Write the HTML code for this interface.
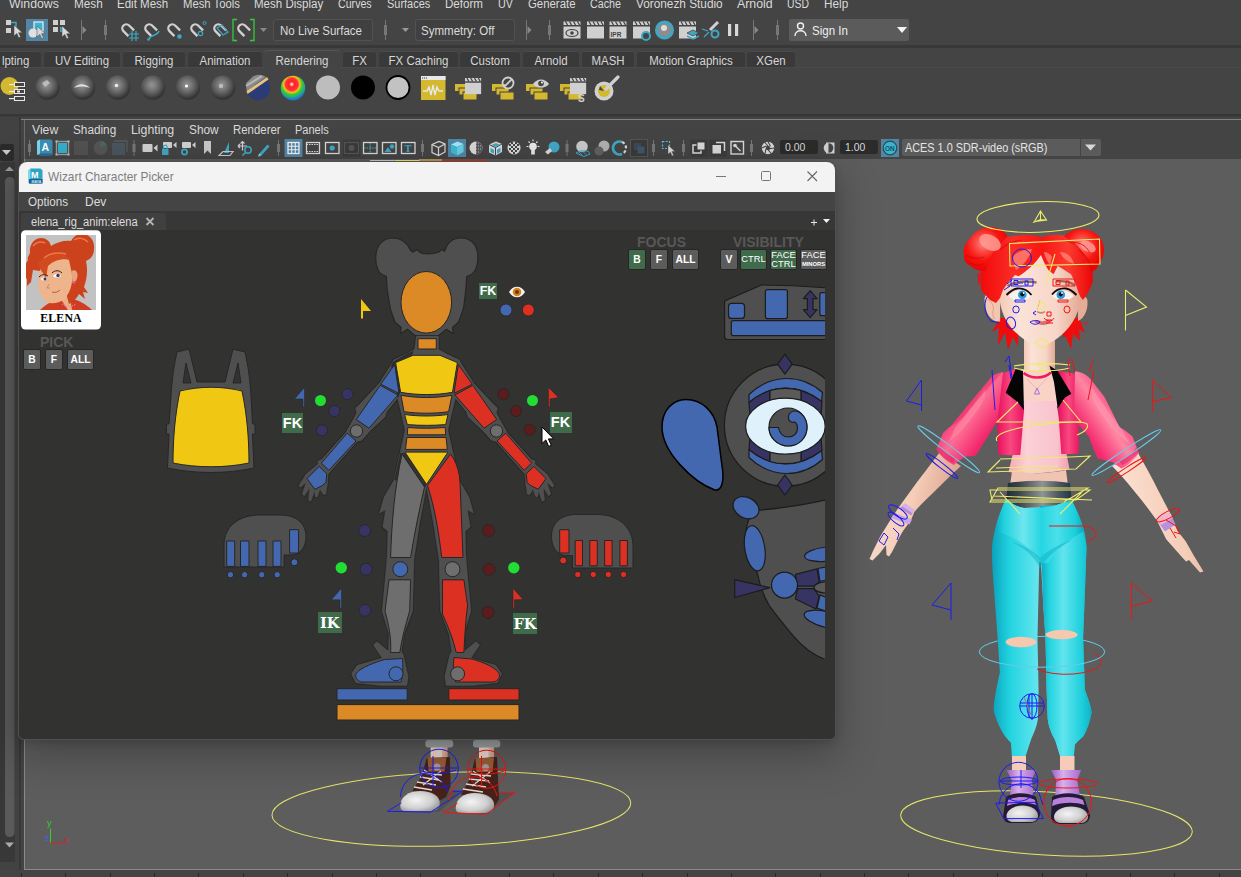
<!DOCTYPE html>
<html lang="en"><head><meta charset="utf-8"><title>Wizart Character Picker</title>
<style>
html,body{margin:0;padding:0;background:#444;overflow:hidden}
#root{position:relative;width:1241px;height:877px;background:#444;overflow:hidden;font-family:"Liberation Sans",sans-serif;font-size:12px;color:#dadada}
#root svg{position:absolute;left:0;top:0}
.t{position:absolute;white-space:nowrap;line-height:14px;height:14px;transform-origin:0 50%}
.mm{top:-2.8px;font-size:12px}
.tab{position:absolute;top:51px;height:16px;background:#393939;border-radius:3px 3px 0 0;box-shadow:inset 0 1px 0 #4a4a4a;}
.tab span{position:absolute;left:0;right:0;top:3px;text-align:center;font-size:12px;transform:scaleX(.955);line-height:15px;color:#d6d6d6}
.tab.act{top:50px;height:18px;background:#444;box-shadow:inset 0 1px 0 #555}
.tab.act span{top:4px}
.fld{position:absolute;box-sizing:border-box;border:1px solid #525252;border-radius:3px;background:#404040}
.pm{top:122.5px;font-size:12px}
#win{position:absolute;left:19px;top:162px;width:816px;height:578px;border-radius:8px 8px 0 0;overflow:hidden;background:#323231;box-shadow:0 0 0 1px #2c2c2c}
.btn{position:absolute;box-sizing:border-box;height:21px;border:1px solid #262626;border-radius:2px;background:#5c5c5c;color:#fff;font-weight:bold;font-size:10.3px;text-align:center;line-height:19px;font-family:"Liberation Sans",sans-serif}
.btn.g{background:#3f6b4b}
.btn.s{font-weight:normal;font-size:9.3px;line-height:9px}
.lbl{position:absolute;background:#3f6b4b;color:#fff;font-weight:bold;text-align:center}
.hd{position:absolute;color:#585858;font-weight:bold;font-size:14px;line-height:14px}
</style></head><body><div id="root">
<!-- ===== Maya main chrome ===== -->
<svg width="1241" height="877" viewBox="0 0 1241 877">
<!-- status line separators -->
<rect x="0" y="45" width="1241" height="3" fill="#383838"/>
<rect x="0" y="67" width="1241" height="1" fill="#4a4a4a"/>
<rect x="0" y="114" width="1241" height="2.500" fill="#373737"/>
<rect x="21" y="119" width="1220" height="1" fill="#808080"/>
<rect x="24" y="120" width="1" height="40" fill="#6c6c6c"/>
<!-- left toolbox column -->
<rect x="0" y="117" width="19" height="760" fill="#424242"/><rect x="0" y="162" width="15" height="700" fill="#383838"/>
<rect x="19" y="117" width="2" height="760" fill="#383838"/>
<rect x="0" y="144" width="14" height="17" rx="2" fill="#2b2b2b"/>
<path d="M2 150h9l-4.5 5z" fill="#c8c8c8"/>
<path d="M5 171h9l-4.5 -4.5z" fill="#9a9a9a"/>
<rect x="5" y="177" width="9.500" height="660" rx="4.500" fill="#5a5a5a"/>
<path d="M5 842.500h9l-4.500 5z" fill="#aaa"/>
<!-- viewport -->
<rect x="24" y="159" width="1217" height="710" fill="#5d5d5d"/>
<rect x="24" y="869" width="1217" height="1" fill="#8a8a8a"/><rect x="24" y="159" width="1" height="711" fill="#8a8a8a"/>
<rect x="0" y="870" width="1241" height="7" fill="#444"/>
<g fill="#2a2a2a"><rect x="21" y="873" width="1" height="4"/><rect x="65" y="873" width="1" height="4"/><rect x="110" y="873" width="1" height="4"/><rect x="154" y="873" width="1" height="4"/><rect x="198" y="873" width="1" height="4"/><rect x="243" y="873" width="1" height="4"/><rect x="287" y="873" width="1" height="4"/><rect x="332" y="873" width="1" height="4"/><rect x="376" y="873" width="1" height="4"/><rect x="420" y="873" width="1" height="4"/><rect x="465" y="873" width="1" height="4"/><rect x="509" y="873" width="1" height="4"/><rect x="553" y="873" width="1" height="4"/><rect x="598" y="873" width="1" height="4"/><rect x="642" y="873" width="1" height="4"/><rect x="687" y="873" width="1" height="4"/><rect x="731" y="873" width="1" height="4"/><rect x="775" y="873" width="1" height="4"/><rect x="820" y="873" width="1" height="4"/><rect x="864" y="873" width="1" height="4"/><rect x="908" y="873" width="1" height="4"/><rect x="953" y="873" width="1" height="4"/><rect x="997" y="873" width="1" height="4"/><rect x="1042" y="873" width="1" height="4"/><rect x="1086" y="873" width="1" height="4"/><rect x="1130" y="873" width="1" height="4"/><rect x="1174" y="873" width="1" height="4"/><rect x="1219" y="873" width="1" height="4"/></g>
</svg>
<!-- main menu --><div class="t mm" style="left:9.4px;transform:scaleX(1.025)">Windows</div><div class="t mm" style="left:73.9px;transform:scaleX(0.978)">Mesh</div><div class="t mm" style="left:116.9px;transform:scaleX(0.960)">Edit Mesh</div><div class="t mm" style="left:183.1px;transform:scaleX(0.942)">Mesh Tools</div><div class="t mm" style="left:254.4px;transform:scaleX(0.961)">Mesh Display</div><div class="t mm" style="left:338.1px;transform:scaleX(0.886)">Curves</div><div class="t mm" style="left:386.9px;transform:scaleX(0.912)">Surfaces</div><div class="t mm" style="left:445.1px;transform:scaleX(0.966)">Deform</div><div class="t mm" style="left:498.1px;transform:scaleX(0.900)">UV</div><div class="t mm" style="left:528.1px;transform:scaleX(0.949)">Generate</div><div class="t mm" style="left:590.1px;transform:scaleX(0.894)">Cache</div><div class="t mm" style="left:635.6px;transform:scaleX(0.984)">Voronezh Studio</div><div class="t mm" style="left:736.9px;transform:scaleX(1.029)">Arnold</div><div class="t mm" style="left:787.4px;transform:scaleX(0.864)">USD</div><div class="t mm" style="left:823.9px;transform:scaleX(0.980)">Help</div>
<!-- status line fields -->
<div class="fld" style="left:273px;top:19px;width:100px;height:22px"></div><div class="t" style="left:280px;top:23.8px;font-size:12px;transform:scaleX(.96)">No Live Surface</div>
<div class="fld" style="left:415px;top:19px;width:100px;height:22px"></div><div class="t" style="left:421px;top:23.8px;font-size:12px;transform:scaleX(.96)">Symmetry: Off</div>
<div style="position:absolute;left:789px;top:19px;width:120px;height:22px;background:#5b5b5b;border-radius:2px"></div><div class="t" style="left:812px;top:24.2px;font-size:12px;transform:scaleX(.96);color:#eee">Sign In</div>
<!-- shelf tabs -->
<div class="tab" style="left:-8px;width:49px"><span style="left:9px;text-align:left">lpting</span></div>
<div class="tab" style="left:44px;width:76px"><span>UV Editing</span></div>
<div class="tab" style="left:123px;width:62px"><span>Rigging</span></div>
<div class="tab" style="left:188px;width:74px"><span>Animation</span></div>
<div class="tab act" style="left:264px;width:76px"><span>Rendering</span></div>
<div class="tab" style="left:343px;width:33px"><span>FX</span></div>
<div class="tab" style="left:379px;width:79px"><span>FX Caching</span></div>
<div class="tab" style="left:460px;width:60px"><span>Custom</span></div>
<div class="tab" style="left:523px;width:56px"><span>Arnold</span></div>
<div class="tab" style="left:582px;width:52px"><span>MASH</span></div>
<div class="tab" style="left:637px;width:108px"><span>Motion Graphics</span></div>
<div class="tab" style="left:747px;width:48px"><span>XGen</span></div>
<!-- panel menu --><div class="t pm" style="left:32.4px;transform:scaleX(1.016)">View</div><div class="t pm" style="left:72.9px;transform:scaleX(0.981)">Shading</div><div class="t pm" style="left:130.9px;transform:scaleX(1.027)">Lighting</div><div class="t pm" style="left:188.9px;transform:scaleX(0.989)">Show</div><div class="t pm" style="left:232.9px;transform:scaleX(0.953)">Renderer</div><div class="t pm" style="left:294.9px;transform:scaleX(0.918)">Panels</div>
<div style="position:absolute;left:780px;top:140px;width:38px;height:14px;background:#2b2b2b;border-radius:2px"></div><div class="t" style="left:784.5px;top:140.3px;font-size:11.2px;transform:scaleX(.93)">0.00</div>
<div style="position:absolute;left:840px;top:140px;width:38px;height:14px;background:#2b2b2b;border-radius:2px"></div><div class="t" style="left:845px;top:140.3px;font-size:11.2px;transform:scaleX(.93)">1.00</div>
<div style="position:absolute;left:902px;top:139px;width:199px;height:17px;background:#5b5b5b;border-radius:2px"></div><div style="position:absolute;left:1080px;top:139px;width:1px;height:17px;background:#444"></div>
<div class="t" style="left:905px;top:141px;font-size:12px;transform:scaleX(.905);color:#e4e4e4">ACES 1.0 SDR-video (sRGB)</div>
<!-- ===== toolbar icons ===== -->
<svg width="1241" height="160" viewBox="0 0 1241 160">
<defs>
<radialGradient id="sph" cx="0.45" cy="0.4" r="0.56"><stop offset="0" stop-color="#949494"/><stop offset="0.3" stop-color="#7c7c7c"/><stop offset="0.65" stop-color="#5a5a5a"/><stop offset="0.9" stop-color="#3e3e3e"/><stop offset="1" stop-color="#343434"/></radialGradient>
<radialGradient id="rain" cx="0.45" cy="0.35" r="0.6"><stop offset="0" stop-color="#fff"/><stop offset="0.18" stop-color="#f22"/><stop offset="0.42" stop-color="#f33"/><stop offset="0.55" stop-color="#f5c020"/><stop offset="0.7" stop-color="#3c3"/><stop offset="0.88" stop-color="#2a8"/><stop offset="1" stop-color="#27c"/></radialGradient>
<g id="hdl"><rect x="-0.5" y="-10" width="1" height="20" fill="#777"/><rect x="-1.5" y="-5" width="3" height="10" fill="#777"/></g>
<g id="hdl2"><rect x="-0.5" y="-8" width="1" height="16" fill="#777"/><rect x="-1.5" y="-4" width="3" height="8" fill="#777"/></g>
<path id="mag" d="M-4 6V-1A4 4 0 0 1 4 -1V6" fill="none" stroke="#d0d0d0" stroke-width="2.3" transform="rotate(-45)"/>
<path id="cur" d="M0 0v11l2.8-2.6 2 4.4 1.8-.8-2-4.3h3.7z" fill="#d8d8d8" stroke="#444" stroke-width=".5"/>
<g id="clap"><rect x="0" y="5" width="17" height="12" fill="#d0d0d0"/><rect x="0" y="0" width="17" height="3.5" fill="#d0d0d0"/><path d="M2 0l2 3.5M6 0l2 3.5M10 0l2 3.5M14 0l2 3.5" stroke="#444" stroke-width="1.3"/></g>
<g id="ystack"><rect x="0" y="8" width="13" height="7" fill="#d4b82f"/><rect x="4" y="12" width="13" height="7" fill="#d4b82f" stroke="#444" stroke-width="1"/><rect x="8" y="16" width="14" height="8" fill="#d4b82f" stroke="#444" stroke-width="1"/></g>
</defs>
<g>
<rect x="6" y="20" width="5" height="5" fill="#d0d0d0"/><rect x="6" y="28" width="5" height="5" fill="#d0d0d0"/><path d="M11 22.5h5v5" fill="none" stroke="#3fa7c4" stroke-width="1.5"/><use href="#cur" x="14" y="25"/>
<rect x="26" y="19" width="22" height="22" fill="#5285a6"/><rect x="34" y="22" width="9" height="9" fill="#38b6cf" stroke="#eee" stroke-width="1.2"/><circle cx="33" cy="33" r="4.5" fill="#e0e0e0"/><use href="#cur" x="37" y="26"/>
<rect x="53" y="20" width="5" height="5" fill="#d0d0d0"/><rect x="60" y="20" width="5" height="5" fill="#d0d0d0"/><rect x="53" y="27" width="5" height="5" fill="#d0d0d0"/><rect x="60" y="27" width="4" height="5" fill="#3fa7c4"/><use href="#cur" x="62" y="26"/>
<rect x="81" y="20" width="1" height="20" fill="#777"/><path d="M82.5 26l4 4-4 4z" fill="#888"/>
<use href="#hdl" x="105.5" y="30"/>
<use href="#mag" x="127" y="29"/>
<use href="#mag" x="150" y="29"/>
<use href="#mag" x="173" y="29"/>
<use href="#mag" x="196" y="29"/>
<use href="#mag" x="219" y="29"/>
<use href="#mag" x="243" y="29"/>
<path d="M129 34h10M129 38h10M132 31v10M136 31v10" stroke="#3fa7c4" stroke-width="1.2" fill="none"/>
<path d="M149 39c1-5 8-2 10-8" stroke="#3fa7c4" stroke-width="1.6" fill="none"/><circle cx="148.5" cy="39.5" r="1.3" fill="#3fa7c4"/>
<circle cx="179.5" cy="36.5" r="2.2" fill="#3fa7c4"/>
<circle cx="200.5" cy="33.5" r="2.2" fill="none" stroke="#3fa7c4" stroke-width="1.2"/><circle cx="204.5" cy="23" r="1.5" fill="none" stroke="#3fa7c4" stroke-width="1"/>
<path d="M217 28l5-3 6 7-5 3z" fill="none" stroke="#3fa7c4" stroke-width="1.2"/>
<path d="M237 19.5h-4v21h4M250 19.5h4v21h-4" fill="none" stroke="#33cc33" stroke-width="1.3"/>
<path d="M260 28h7l-3.5 4z" fill="#888"/>
<use href="#hdl" x="385.5" y="30"/>
<path d="M402 28h7l-3.5 4z" fill="#999"/>
<rect x="526" y="20" width="1" height="20" fill="#777"/><path d="M527.5 26l4 4-4 4z" fill="#888"/>
<use href="#hdl" x="549.5" y="30"/>
<use href="#clap" x="563.5" y="21.5"/><ellipse cx="572" cy="33" rx="6" ry="3.5" fill="#d0d0d0" stroke="#444" stroke-width="1.2"/><circle cx="572" cy="33" r="1.8" fill="#444"/>
<use href="#clap" x="587" y="21.5"/>
<use href="#clap" x="609.5" y="21.5"/><text x="610.5" y="37" font-family="Liberation Sans,sans-serif" font-weight="bold" font-size="6.5" fill="#444">IPR</text>
<use href="#clap" x="633" y="21.5"/><circle cx="646" cy="36" r="4" fill="#444" stroke="#3fa7c4" stroke-width="2"/>
<circle cx="664.5" cy="30" r="8" fill="#8c8c8c" stroke="#3fa7c4" stroke-width="3"/><circle cx="664" cy="28" r="3" fill="#ddd"/>
<use href="#clap" x="679" y="21.5"/><path d="M687 33l6-3 6 3-6 3z" fill="#3fa7c4" stroke="#444" stroke-width=".8"/><path d="M687 36l6 3 6-3" fill="none" stroke="#3fa7c4" stroke-width="1.5"/>
<path d="M710 30l8-8" stroke="#d0d0d0" stroke-width="3"/><path d="M702 29l6 2M704 37l5-5" stroke="#3fa7c4" stroke-width="1.3"/><circle cx="715" cy="34" r="3.5" fill="#444" stroke="#3fa7c4" stroke-width="2"/>
<rect x="728" y="24" width="3.2" height="12" fill="#d8d8d8"/><rect x="735" y="24" width="3.2" height="12" fill="#d8d8d8"/>
<rect x="753" y="20" width="1" height="20" fill="#777"/><path d="M754.5 26l4 4-4 4z" fill="#888"/>
<use href="#hdl" x="777.5" y="30"/>
</g>
</svg>
<svg width="1241" height="160" viewBox="0 0 1241 160" style="z-index:3">
<circle cx="800.5" cy="26" r="3" fill="none" stroke="#f0f0f0" stroke-width="1.4"/><path d="M795 36c0-7 11-7 11 0" fill="none" stroke="#f0f0f0" stroke-width="1.4"/>
<path d="M897 27h10l-5 6z" fill="#f4f4f4"/>
<circle cx="9.5" cy="86" r="9" fill="#d4b82f"/>
<rect x="14.5" y="82.5" width="10" height="4" fill="#444" stroke="#e8e8e8" stroke-width="1"/><rect x="9" y="84" width="5" height="1.2" fill="#e8e8e8"/>
<rect x="14.5" y="89.5" width="10" height="4" fill="#444" stroke="#e8e8e8" stroke-width="1"/><rect x="9" y="91" width="5" height="1.2" fill="#e8e8e8"/>
<rect x="14.5" y="96.5" width="10" height="4" fill="#444" stroke="#e8e8e8" stroke-width="1"/><rect x="9" y="98" width="5" height="1.2" fill="#e8e8e8"/>
<rect x="17" y="90.5" width="3" height="2" fill="#e8e8e8"/>
<circle cx="47.5" cy="87.5" r="12.3" fill="url(#sph)"/>
<circle cx="83" cy="87.5" r="12.3" fill="url(#sph)"/>
<circle cx="118" cy="87.5" r="12.3" fill="url(#sph)"/>
<circle cx="153" cy="87.5" r="12.3" fill="url(#sph)"/>
<circle cx="188" cy="87.5" r="12.3" fill="url(#sph)"/>
<circle cx="223" cy="87.5" r="12.3" fill="url(#sph)"/>
<path d="M42 83l5-3 3 3-5 4z" fill="#c8c8c8" opacity=".8"/>
<path d="M74 88c4-5 11-5 16 0-5-2-11-2-16 0z" fill="#e0e0e0"/>
<circle cx="116.5" cy="85.5" r="1.8" fill="#e8e8e8"/><circle cx="186.5" cy="86" r="1.6" fill="#fff"/><circle cx="221" cy="86" r="2.2" fill="#c8c8c8" opacity=".8"/>
<circle cx="258" cy="88" r="12" fill="#2b3b78"/><path d="M246.5 91L266 77a12 12 0 0 0-13-.5L246 83z" fill="#8a8a8a"/><path d="M246.5 91l20.5-14 1.5 2.5L247.5 94z" fill="#e8c27a"/><path d="M246 86l16-10" stroke="#b8b8b8" stroke-width="2"/>
<circle cx="293" cy="88" r="12.3" fill="url(#rain)"/>
<circle cx="328" cy="87.5" r="12" fill="#bdbdbd"/><circle cx="363" cy="87.5" r="12" fill="#000"/><circle cx="398" cy="87.5" r="11.5" fill="#c2c2c2" stroke="#000" stroke-width="1.8"/>
<rect x="421" y="76" width="24.5" height="24" fill="#d4b82f"/><rect x="421" y="76" width="24.5" height="4" fill="#e8e8e8"/><path d="M422 78h5" stroke="#444" stroke-width="1.2" stroke-dasharray="1.2 .8"/><path d="M423 91h4l2-4 2 8 2-10 2 10 2-8 2 4h4" fill="none" stroke="#e8e8e8" stroke-width="1.4"/>
<use href="#ystack" x="455" y="76"/><g transform="translate(465,78) scale(.95)"><use href="#clap"/></g>
<use href="#ystack" x="492" y="76"/><circle cx="508" cy="83" r="5.5" fill="none" stroke="#d0d0d0" stroke-width="1.8"/><path d="M504 87l8-8" stroke="#d0d0d0" stroke-width="1.8"/>
<use href="#ystack" x="526" y="76"/><path d="M533 84c4-6 12-6 16 0-4 5-12 5-16 0z" fill="#d0d0d0"/><circle cx="541" cy="83.5" r="2.8" fill="#444"/><circle cx="542" cy="82.5" r="1" fill="#fff"/>
<use href="#ystack" x="560" y="76"/><g transform="translate(570,78) scale(.95)"><use href="#clap"/></g><text x="578" y="102" font-family="Liberation Sans,sans-serif" font-weight="bold" font-size="10" fill="#d0d0d0">S</text>
<circle cx="604" cy="91" r="9.5" fill="#d0d0d0"/><circle cx="604" cy="91" r="6" fill="#d4b82f"/><path d="M604 91l-5-1 1-4z" fill="#444"/><path d="M606 89l12-12" stroke="#d0d0d0" stroke-width="3.2" stroke-linecap="round"/>
<use href="#hdl2" x="29.5" y="148"/>
<path d="M37 141l3-1.5h11l1.5 1.5v13l-1.5 1.5h-11l-3-1.5z" fill="#3c8fb5"/><path d="M37 141l3-1.5v14l-3 1.5z" fill="#7fd6ea"/><path d="M40 153.5h12l-1.5 2h-11z" fill="#2a6a94"/><text x="41.5" y="151" font-family="Liberation Sans,sans-serif" font-weight="bold" font-size="10.5" fill="#fff">A</text>
<rect x="58" y="143" width="9" height="10" fill="#35b0cc"/><path d="M56.5 141.5h12v13h-12z" fill="none" stroke="#999" stroke-width="1.4"/><g fill="#bbb"><rect x="55.5" y="140.5" width="2" height="2"/><rect x="67.5" y="140.5" width="2" height="2"/><rect x="55.5" y="153.5" width="2" height="2"/><rect x="67.5" y="153.5" width="2" height="2"/></g>
<rect x="74" y="141" width="14" height="14" fill="#525252"/><circle cx="100.5" cy="148" r="7" fill="#555"/><path d="M100.5 148v-7a7 7 0 0 1 6 3.5z" fill="#4a6a5a"/><rect x="112" y="143" width="13" height="12" fill="#4a5560"/><path d="M114 141h13v11" fill="none" stroke="#5a5a5a" stroke-width="1.3"/>
<use href="#hdl2" x="134" y="148"/>
<rect x="142.5" y="144" width="10" height="8" rx="1" fill="#d0d0d0"/><path d="M153.5 148l4-3.5v7z" fill="#d0d0d0"/>
<rect x="163" y="142" width="9" height="6" rx="1" fill="#d0d0d0"/><path d="M173 145l3.5-3v6z" fill="#d0d0d0"/><rect x="162" y="149" width="6.5" height="6" fill="#3fa7c4"/><path d="M163.5 149v-2a1.8 1.8 0 0 1 3.6 0v2" fill="none" stroke="#3fa7c4" stroke-width="1.2"/>
<rect x="182" y="142" width="9" height="6" rx="1" fill="#d0d0d0"/><path d="M192 145l3.5-3v6z" fill="#d0d0d0"/><circle cx="184.5" cy="152" r="2.6" fill="none" stroke="#3fa7c4" stroke-width="1.8"/>
<path d="M204 141h7v13l-3.5-3.5-3.5 3.5z" fill="#c8c8c8"/>
<path d="M224 153l5-11v11z" fill="#3fa7c4"/><path d="M219 155.5l4-4h10l-3 4z" fill="none" stroke="#c8c8c8" stroke-width="1.2"/>
<path d="M238 146h9M242.5 141.5v9M240.5 143.5l2-2 2 2M238 146l2-2M238 146l2 2" stroke="#d0d0d0" stroke-width="1.2" fill="none"/><circle cx="248" cy="150" r="3.2" fill="none" stroke="#3fa7c4" stroke-width="1.5"/><path d="M245.5 152.5l-3 3" stroke="#3fa7c4" stroke-width="1.6"/>
<path d="M259 154l8.5-9.5 2 2-8.5 9.5-3 1z" fill="#3fa7c4"/><path d="M258 156l1.5-2.5 1.5 1.5z" fill="#d0d0d0"/>
<use href="#hdl2" x="278.5" y="148"/>
<rect x="284.5" y="139" width="18" height="18" fill="#5285a6"/><rect x="288" y="142.5" width="11" height="11" fill="none" stroke="#f0f0f0" stroke-width="1.3"/><path d="M291.700 142.5v11M295.3 142.5v11M288 146.2h11M288 149.8h11" stroke="#f0f0f0" stroke-width="1.100"/>
<rect x="306.5" y="142.5" width="13" height="11" fill="none" stroke="#d8d8d8" stroke-width="1.3"/><path d="M306.5 144.5h13M306.5 151.5h13" stroke="#d8d8d8" stroke-width="1" stroke-dasharray="1.5 1"/>
<rect x="325.5" y="142.5" width="13.5" height="11" fill="none" stroke="#d8d8d8" stroke-width="1.3"/><circle cx="332.2" cy="148" r="2.6" fill="#3fa7c4"/>
<rect x="343" y="139.5" width="17" height="17" fill="#3a3a3a"/><rect x="344.5" y="142.5" width="14" height="11" fill="none" stroke="#555" stroke-width="1.2"/><circle cx="351.5" cy="148" r="3" fill="#555"/>
<rect x="363.5" y="142.5" width="13.5" height="11" fill="none" stroke="#d8d8d8" stroke-width="1.3"/><path d="M364 148h13M370.2 143v10" stroke="#3fa7c4" stroke-width="1.100" stroke-dasharray="1.6 1"/>
<rect x="382.5" y="142.5" width="13.5" height="11" fill="none" stroke="#d8d8d8" stroke-width="1.3"/><path d="M384.5 152l3.5-5 3.5 5z" fill="#3fa7c4"/><circle cx="392" cy="146.5" r="2.2" fill="#3fa7c4"/>
<rect x="401.5" y="142.5" width="13.5" height="11" fill="none" stroke="#d8d8d8" stroke-width="1.3"/><text x="404.5" y="152.3" font-family="Liberation Serif,serif" font-weight="bold" font-size="10.5" fill="#3fa7c4">T</text>
<use href="#hdl2" x="422.5" y="148"/>
<path d="M432 144.5l7-3 6 2.5v8l-6.5 3.5-6.5-3zM432 144.5l6.5 3 6.5-3.5M438.5 147.5v8" fill="none" stroke="#d8d8d8" stroke-width="1.2"/>
<rect x="448" y="139" width="18" height="18" fill="#5285a6"/><path d="M451 144.5l6.5-3 6 2.5-6.5 3z" fill="#9fe6f2"/><path d="M451 144.5l6 3v8l-6-3z" fill="#3fb8d2"/><path d="M457 147.5l6.5-3.5v8l-6.5 3.5z" fill="#66cfe2"/>
<circle cx="476" cy="148" r="6.5" fill="#d8d8d8"/><path d="M476 141.5a6.5 6.5 0 0 1 0 13z" fill="#555"/><path d="M476 143h4M476 146h6M476 149h6M476 152h4" stroke="#d8d8d8" stroke-width=".8" stroke-dasharray="1 1"/>
<path d="M489 144.5l7-3 6 2.5v8l-6.5 3.5-6.5-3z" fill="#d8d8d8"/><path d="M489 144.5l6.5 3 6.5-3.5M495.5 147.5v8" fill="none" stroke="#444" stroke-width="1"/><path d="M491.5 145l4.5-2 4 1.700-4.3 2z" fill="#3fa7c4"/><path d="M490.5 148l3.5 1.700v4l-3.5-1.700zM497 149.700l3.5-2v4l-3.5 2z" fill="#3fa7c4"/>
<circle cx="514" cy="148" r="6.5" fill="#d8d8d8"/><path d="M509 144h2v2h-2zM513 144h2v2h-2zM517 144h2v2h-2zM511 146h2v2h-2zM515 146h2v2h-2zM509 148h2v2h-2zM513 148h2v2h-2zM517 148h2v2h-2zM511 150h2v2h-2zM515 150h2v2h-2zM513 152h2v2h-2zM511 142h2v2h-2zM515 142h2v2h-2z" fill="#444"/>
<circle cx="533" cy="146.5" r="3.8" fill="#e8e8e8"/><rect x="531.2" y="150" width="3.6" height="4.5" fill="#e8e8e8"/><path d="M526.5 146.5h2M537.5 146.5h2M528.5 141.5l1.3 1.3M537.5 141.5l-1.3 1.3M533 139.5v1.8" stroke="#e8e8e8" stroke-width="1.100"/>
<circle cx="554" cy="147" r="5.5" fill="#3fa7c4"/><path d="M545 152l5-4 2 3-4 3.5z" fill="#d8d8d8"/>
<use href="#hdl2" x="567" y="148"/>
<circle cx="582" cy="146.5" r="5.8" fill="#c8c8c8"/><path d="M576 153l4-2h8l2 3-6 2.5z" fill="none" stroke="#3fa7c4" stroke-width="1"/><path d="M579 152l3 3M583 151.5l3 3" stroke="#3fa7c4" stroke-width=".9"/>
<circle cx="604" cy="146" r="5.5" fill="#b0b0b0"/><circle cx="599" cy="151" r="4.5" fill="#606060"/>
<path d="M622 142a6.5 6.5 0 1 0 0 12" fill="none" stroke="#3fa7c4" stroke-width="2.6"/><path d="M622 142a6.5 6.5 0 0 1 0 12" fill="none" stroke="#d8d8d8" stroke-width="2.2" stroke-dasharray="3 2"/>
<rect x="630.5" y="139.5" width="17" height="17" fill="#3a3a3a" stroke="#555" stroke-width="1"/><rect x="634" y="143" width="7" height="7" fill="#3b4958"/><rect x="637.5" y="146.5" width="7" height="7" fill="#41566b"/>
<use href="#hdl2" x="653.5" y="148"/>
<rect x="662.5" y="141.5" width="7" height="7" fill="none" stroke="#47c0dc" stroke-width="1.2" stroke-dasharray="2 1.3"/><g transform="translate(668,145) scale(.85)"><use href="#cur"/></g>
<use href="#hdl2" x="683.5" y="148"/>
<rect x="690.5" y="139.5" width="17" height="17" fill="#3c3c3c"/><rect x="693" y="145" width="8" height="8" fill="none" stroke="#d8d8d8" stroke-width="1.5"/><rect x="697" y="142" width="8" height="8" fill="#d8d8d8" stroke="#3c3c3c" stroke-width="1"/>
<rect x="709.5" y="139.5" width="17" height="17" fill="#3c3c3c"/><rect x="712.5" y="145" width="8.5" height="8.5" fill="#d8d8d8"/><path d="M716 142.5h8.5v8.5" fill="none" stroke="#d8d8d8" stroke-width="1.5"/>
<rect x="731" y="141.5" width="12.5" height="12.5" fill="none" stroke="#d8d8d8" stroke-width="1.4"/><path d="M735 145.5l5.5 5.5" stroke="#d8d8d8" stroke-width="1.5"/><circle cx="735" cy="145.5" r="1.8" fill="#d8d8d8"/>
<use href="#hdl2" x="751.5" y="148"/>
<circle cx="768" cy="148" r="6.2" fill="#d8d8d8"/><circle cx="768" cy="148" r="2.2" fill="#444"/><path d="M768 141.8l2.5 4.5M774.2 148l-5 .8M771 153.5l-3-4M765 153.5l1-5M761.8 148l4.5-2M765 142.5l3 3.5" stroke="#444" stroke-width="1.100"/>
<path d="M826 142.5h8.5v11H826z" fill="#d0d0d0"/><circle cx="828.5" cy="148" r="4.8" fill="#d0d0d0"/><path d="M828.5 143.2a4.8 4.8 0 0 1 0 9.6z" fill="#444"/>
<rect x="881" y="139" width="18" height="18" fill="#5285a6"/><circle cx="890" cy="148" r="6.8" fill="#35b6cf" stroke="#2a4a5a" stroke-width="1.2"/><text x="885" y="150.8" font-family="Liberation Sans,sans-serif" font-weight="bold" font-size="6.5" fill="#2a4a5a">ON</text>
<path d="M1085 144.5h11l-5.5 6z" fill="#d8d8d8"/>
</svg>
<!-- ===== viewport 3D content ===== -->
<svg width="1241" height="877" viewBox="0 0 1241 877">
<defs>
<linearGradient id="skinH" x1="0" x2="1"><stop offset="0" stop-color="#f3c9b6"/><stop offset=".25" stop-color="#fbe3d8"/><stop offset=".7" stop-color="#f7d6c8"/><stop offset="1" stop-color="#e3a893"/></linearGradient>
<linearGradient id="skinA" x1="0" x2="1" y1="0" y2=".3"><stop offset="0" stop-color="#fde4d6"/><stop offset=".55" stop-color="#f5cdb8"/><stop offset="1" stop-color="#d9a08a"/></linearGradient>
<linearGradient id="skinB" x1="1" x2="0" y1="0" y2=".3"><stop offset="0" stop-color="#d9a08a"/><stop offset=".4" stop-color="#f5cdb8"/><stop offset="1" stop-color="#fde4d6"/></linearGradient>
<radialGradient id="bun" cx=".45" cy=".38" r=".62"><stop offset="0" stop-color="#ff8a8a"/><stop offset=".3" stop-color="#fb4a44"/><stop offset=".62" stop-color="#f61410"/><stop offset="1" stop-color="#e80404"/></radialGradient>
<linearGradient id="hair" x1="0" x2="1"><stop offset="0" stop-color="#f20a0a"/><stop offset=".3" stop-color="#fb2d26"/><stop offset=".55" stop-color="#f91612"/><stop offset=".78" stop-color="#fb3a30"/><stop offset="1" stop-color="#ea0606"/></linearGradient>
<linearGradient id="jkL" x1="0" x2="1" y1="0" y2="1"><stop offset="0" stop-color="#e60e58"/><stop offset=".3" stop-color="#f42a70"/><stop offset=".5" stop-color="#fd6c92"/><stop offset=".72" stop-color="#f3266c"/><stop offset="1" stop-color="#e30c54"/></linearGradient>
<linearGradient id="jkR" x1="1" x2="0" y1="0" y2="1"><stop offset="0" stop-color="#ea1460"/><stop offset=".3" stop-color="#f63a7a"/><stop offset=".5" stop-color="#ff86a2"/><stop offset=".72" stop-color="#f42c70"/><stop offset="1" stop-color="#e30c54"/></linearGradient>
<linearGradient id="jkB" x1="0" x2="1"><stop offset="0" stop-color="#e80e5a"/><stop offset=".5" stop-color="#f84880"/><stop offset="1" stop-color="#ea1460"/></linearGradient>
<linearGradient id="top" x1="0" x2="1"><stop offset="0" stop-color="#f7a8b6"/><stop offset=".3" stop-color="#fbd0d6"/><stop offset=".8" stop-color="#f9c2cc"/><stop offset="1" stop-color="#f49cae"/></linearGradient>
<linearGradient id="belt" x1="0" x2="1"><stop offset="0" stop-color="#1e2c3a"/><stop offset=".2" stop-color="#3c444c"/><stop offset=".55" stop-color="#8e9494"/><stop offset=".8" stop-color="#4c5660"/><stop offset="1" stop-color="#233446"/></linearGradient>
<linearGradient id="pant" x1="0" x2="1"><stop offset="0" stop-color="#0aa6c0"/><stop offset=".1" stop-color="#1fd2de"/><stop offset=".32" stop-color="#6fe6ee"/><stop offset=".52" stop-color="#25d6e2"/><stop offset=".7" stop-color="#4ae0ea"/><stop offset=".9" stop-color="#1ccfdc"/><stop offset="1" stop-color="#0aa6c0"/></linearGradient>
<linearGradient id="legL" x1="0" x2="1"><stop offset="0" stop-color="#0aa2bc"/><stop offset=".18" stop-color="#22d4e0"/><stop offset=".45" stop-color="#62e4ee"/><stop offset=".8" stop-color="#1fd0dc"/><stop offset="1" stop-color="#0fb2c8"/></linearGradient>
<linearGradient id="sock" x1="0" x2="1"><stop offset="0" stop-color="#9a5cc0"/><stop offset=".4" stop-color="#d8b0ec"/><stop offset="1" stop-color="#a468cc"/></linearGradient>
<radialGradient id="toe" cx=".4" cy=".45" r=".7"><stop offset="0" stop-color="#f4f4f4"/><stop offset=".6" stop-color="#cfcfcf"/><stop offset="1" stop-color="#8e8e8e"/></radialGradient>
</defs>
<!-- bit of left model hair peeking above picker -->
<rect x="420" y="159.500" width="67" height="3.500" fill="#b03a24"/><rect x="419" y="159.500" width="23" height="1" fill="#e6e66a"/><rect x="394.500" y="160" width="25" height="1" fill="#e6e66a"/><rect x="370" y="160" width="24.500" height="1" fill="#c8c8c8"/>
<!-- axis icon -->
<path d="M50.500 828.500v14.500" stroke="#30d030" stroke-width="1"/><path d="M50.500 842.500h13" stroke="#e02020" stroke-width="1"/>
<text x="47" y="826" font-family="Liberation Sans,sans-serif" font-size="9" fill="#30d030">y</text><text x="45" y="841" font-family="Liberation Sans,sans-serif" font-size="9" fill="#4060ff">z</text><text x="64" y="843" font-family="Liberation Sans,sans-serif" font-size="9" fill="#e02020">x</text>
<!-- ===== LEFT model (feet under picker) ===== -->
<ellipse cx="451.400" cy="809" rx="179.500" ry="36.800" transform="rotate(-2 451.400 809)" fill="none" stroke="#e6e66a" stroke-width="1"/>
<path d="M437 802l14-12 12 1-24 21-8 0z" fill="#4a4a4a" opacity=".6"/><path d="M486 806l14-14 14 1-26 21-8 0z" fill="#4a4a4a" opacity=".6"/>
<rect x="430.600" y="746" width="17" height="16" fill="url(#skinA)"/><rect x="479" y="746" width="15" height="16" fill="url(#skinA)"/>
<path d="M436 747h6v14h-6zM483.500 747h5v14h-5z" fill="#e8e4e0" opacity=".8"/>
<rect x="425.400" y="740" width="27.800" height="7.500" rx="3" fill="#a2a6a6"/><rect x="473" y="740" width="27.300" height="7.500" rx="3" fill="#a2a6a6"/>
<path d="M426.700 758.200l23.200-1.200.7 29.600-4.500 10.400-9.100 5-24.500-11.600 9.100-14.100z" fill="#46221a"/>
<path d="M427.500 757.500h19l-2 14h-16z" fill="#9c5e38"/><circle cx="437" cy="767" r="3.500" fill="#a8a0a0"/>
<path d="M475 758.500l22-1.500 2 42.500-6 9-32-14 9-16z" fill="#46221a"/>
<path d="M475.500 758h18.500l-1.500 14h-16z" fill="#9c5e38"/><circle cx="485.500" cy="767.500" r="3.500" fill="#a8a0a0"/>
<path d="M422 773l20 2M420 777l19 3M417 782l19 3M414 787l18 3M424 770l18 12M441 771l-18 14" stroke="#e4dcd4" stroke-width="1.300" fill="none"/>
<path d="M471 774l20 2M469 779l20 2M466 784l20 3M463 789l20 3M473 771l17 12M490 772l-18 14" stroke="#e4dcd4" stroke-width="1.300" fill="none"/>
<path d="M400.300 806c0-9 8-15 20-15 12 0 19.500 5 19.500 12 0 5-4 8-9 8h-26c-3 0-4.500-2-4.500-5z" fill="url(#toe)"/>
<path d="M455.700 808c0-9 8-15 19-15 12 0 19.500 5 19.500 12 0 5-4 8-9 8h-25c-3 0-4.500-2-4.500-5z" fill="url(#toe)"/>
<g fill="none" stroke="#1c1cf0" stroke-width="1"><circle cx="439" cy="768.500" r="19.300"/><path d="M400.500 797a23.800 23.800 0 0 1 47-5"/><path d="M387.400 811.300l43.200.8 32-20.800h-10M387.400 811.300l14-8.500"/><path d="M420 768h38M433 756v30M422 771c8 3 24 3 34-1"/></g>
<g fill="none" stroke="#f01414" stroke-width="1"><circle cx="486.700" cy="769.200" r="19"/><path d="M449.500 800a24 24 0 0 1 47.500-4"/><path d="M443.500 812.400l42.500 1.900 29.700-21.900h-15.500M443.500 812.400l14-9"/><path d="M468 769h38M481.500 756v30M470 772c8 3 24 3 34-1"/></g>
<!-- ===== RIGHT model ===== -->
<!-- floor ring + back halves of rings -->
<ellipse cx="1046.500" cy="823.500" rx="146" ry="31.500" transform="rotate(3.300 1046.500 823.500)" fill="none" stroke="#e6e66a" stroke-width="1"/>
<path d="M979.300 651.800a62.700 15.400 0 0 1 125.400 0" fill="none" stroke="#62cdea" stroke-width="1"/>
<!-- arms (skin) -->
<path d="M940 452L961 466C952 474 944 482 936 490C928 498 920 505 914.400 512L911 520L903 531L899 538L892 552L889 556.500L886.500 555L886 545L880 553L872.500 560.500L869.500 559L873 551L880.500 536L891 519L899 507L911.300 490C920 478 930 465 940 452Z" fill="url(#skinA)"/>
<path d="M1138 453L1112 466C1120 474 1127 482 1133.300 490C1142 500 1150 511 1157 520.800L1166.200 539.300L1181 556L1186 561.500L1189 560L1200 572.500L1203.500 571.500L1193.900 555.700L1185.700 541.300L1177.500 531L1170.300 513.600L1158 490C1152 478 1145 465 1138 453Z" fill="url(#skinB)"/>
<!-- wrist bands -->
<path d="M900 508l5-4.500 9.500 7-3.500 5z" fill="#b98ad8"/><path d="M902 506l3-2.500 9.500 7-2 2.800z" fill="#d3b4ea"/>
<path d="M891 518l4-5 17 6.500-2.500 5z" fill="#c9a6e6"/>
<path d="M1157 520.500l6-6.500 7.500-.500 5 11-10.500 7z" fill="#b792dc"/><path d="M1157 520.500l6-6.500 7.500-.500 2 4.500-11.500 7z" fill="#f3b4cc"/>
<!-- back hair spikes -->
<path d="M1000 318l-8 14 7-4-1 17 7-12 3 17 5-13 5 9 1-28zM1079 318l6 15-6-4 1 12-7-8-2 16-5-12-3 0-1-20z" fill="#ee0c0c"/>
<!-- neck -->
<path d="M1024 336h31v36c-8 6-22 6-31 0z" fill="url(#skinH)"/>
<!-- chest skin -->
<path d="M1020 370h36l2 36h-36z" fill="#f8d3c6"/>
<!-- inner top -->
<path d="M1024 401h32c2 14 6 28 8 40l5.500 28c-20 5-42 5-61 3l8-34c3-12 6-24 7.500-37z" fill="url(#top)"/>
<!-- midriff -->
<path d="M1012 471c18 3 36 3 54-1l2 16h-58z" fill="#f1c4b2"/>
<!-- belt -->
<path d="M1008 483c20-3 42-3 62 0l2 20c-8 2-14 4-20 6h-28c-6-2-12-4-18-8z" fill="url(#belt)"/>
<!-- pants -->
<path d="M1006 499C1010 502 1016 507 1024 508L1052 507C1060 504 1066 501 1072 501C1080 516 1086 532 1086.500 547L1084.900 592L1083.100 638L1084.900 690C1088 698 1091 706 1091.600 712.500C1090 722 1087 730 1083.400 736.300C1079 740 1076 743 1074.700 745L1073.700 758L1060.700 758L1055.300 740.600C1051 733 1048.500 726 1047.700 719L1046.600 690L1045.500 638L1043.200 604L1040.900 562L1039.300 562L1038.600 592L1037.500 638L1038.600 690L1037.900 719C1037 726 1034 733 1031.400 738.500L1025 758L1012 758L1010.900 742.800C1007 739 1003 734 1001.100 729.800C998 724 995 717 993.600 710.300C994 700 996 690 999.900 672.300L997.600 638.100L994.200 592.600C993 578 992 564 991.900 549.300C993 531 999 515 1006 499Z" fill="url(#legL)"/>
<path d="M1040 506c8 0 18 0 28-4 8 14 16 30 18.500 45l-1.600 45-1.800 46 1.800 52c3 8 6 16 6.700 22.500-1.600 9.500-4.600 17.500-8.200 23.800-4.400 3.700-7.400 6.700-8.700 8.700l-1 13h-13l-5.400-17.400c-4.300-7.600-6.800-14.600-7.600-21.600l-1.100-29-1.100-52-2.300-34-1.500-42z" fill="url(#legL)"/>
<path d="M1006 499c4 3 10 8 18 9l28-1c8-3 14-6 20-6 5 10 9 20 12 30-14 8-28 18-36 32l-7 0c-8-14-24-26-46-32 2-11 6-22 11-32z" fill="url(#pant)"/>
<path d="M1040 568c-6-12-16-20-28-26 12 3 22 9 28 16 8-8 20-14 32-18-13 7-24 16-32 28z" fill="#10b2c8" opacity=".5"/>
<ellipse cx="1021" cy="642" rx="15.400" ry="5.200" fill="#f7c8b0"/><ellipse cx="1061.500" cy="634.700" rx="16" ry="4.600" fill="#f7c8b0"/>
<!-- jacket body panels -->
<path d="M999 374.600l17-6 8 42-3.700 44.300c-8 .5-16 .3-22-.5l-1.300-34z" fill="url(#jkB)"/>
<path d="M1079.600 374.600l-22-4 .5 38 3.200 45.400c6 0 12 0 17.400-.5v-33.500z" fill="url(#jkB)"/>
<!-- sleeves -->
<path d="M1003 372c-6 1-10 3-14 8l-20 24-18 22c-4 3-6 5-8 7l-6.600 16.400c4 6 10 12 17.300 15.500l11-8.200 11-.9c6-10 14-22 22-35.600z" fill="url(#jkL)"/>
<path d="M1075 371c6 1 11 3 15.500 8l14 18 15 30c5 3 9 6 13 9.600l6.400 16.400c-4 6-10 12-17.400 15.500l-9-6.300-14.700-3.700c-4-8-6-14-9-21.900l-14.800-17.400z" fill="url(#jkR)"/>
<path d="M985 388c-8 12-18 26-30 40l-6 14c10-8 22-22 30-34 5-8 8-14 6-20z" fill="#ff8fa8" opacity=".55"/>
<path d="M1092 388c8 12 18 26 30 42l8 14c-12-8-24-22-32-36-5-8-8-14-6-20z" fill="#ff9ab0" opacity=".6"/>
<path d="M1003 372c-6 1-10 3-14 8l-20 24-18 22c6-2 14-10 20-18 10-12 20-24 32-36z" fill="#e8105a" opacity=".35"/>
<path d="M940 446c4 6 10 10 16 12l-3 5c-8-3-13-8-17-14z" fill="#e4105c" opacity=".5"/><path d="M1136 448c-4 6-10 10-17 13l3 4c8-3 13-8 18-15z" fill="#e4105c" opacity=".5"/>
<!-- collars -->
<path d="M1015.700 369.100l7.300 1.900 1 39.200-6.400-8.200-11.900-9.200z" fill="#050505"/>
<path d="M1049.500 365.500l8.200 5.500 13.700 22.700-6.400 3.700-7.300 10.900-3.700-26.400z" fill="#050505"/>
<!-- choker + pendant -->
<path d="M1023.500 373c8 6 20 6 27.500-.5" fill="none" stroke="#ee1c60" stroke-width="2.600"/>
<path d="M1027 379l10 10 10-11" fill="none" stroke="#f2a0b4" stroke-width=".7"/><path d="M1037 388l-2.500 6h5z" fill="none" stroke="#a070e0" stroke-width="1"/>
<!-- head -->
<path d="M984.600 299c0-4 3-6.500 6.500-5.500l9 4v24c-9 1-15.500-8-15.500-22.500z" fill="#f3c6b2"/><path d="M987.500 300c2 0 5 3 6 8-1 5-1 8 1 11" fill="none" stroke="#dca08a" stroke-width="1"/>
<path d="M1078 297c4-2 9-1 9.500 4 .5 9-3 17-9.500 20z" fill="#e6ac96"/>
<path d="M999 290c-1-24 12-42 41-42s42 18 41 44c0 19-8 33-19.500 43-9.500 8-15.500 10.500-21.500 10.500s-13-3-21.500-10.500c-12-10-19.500-24-19.500-45z" fill="url(#skinH)"/>
<!-- eyes -->
<path d="M1009 296.500c4-7.500 16-8 22-.5-5 6-16 6-22 .5z" fill="#f6f2f2"/><circle cx="1022.300" cy="294.800" r="4.300" fill="#2b9ad6"/><circle cx="1022.300" cy="294.300" r="2.100" fill="#06141e"/><circle cx="1023.600" cy="293" r=".9" fill="#fff"/>
<path d="M1052.500 296c5-7.500 16-7.500 21.500 0-5 5.500-16 6-21.500 0z" fill="#f6f2f2"/><circle cx="1060.800" cy="294.800" r="4.300" fill="#2b9ad6"/><circle cx="1060.800" cy="294.300" r="2.100" fill="#06141e"/><circle cx="1062" cy="293" r=".9" fill="#fff"/>
<path d="M1006.500 295c3-3 6-6 11-6.500 5-.5 10 1.500 14 6.500M1052 294.500c4-5 9-6.500 14-6 4 .5 7 3 10.500 6.500" fill="none" stroke="#140a0a" stroke-width="1.900"/>
<path d="M1007.500 286c8-4.500 18-5.500 29-3.500M1056 281.500c7-1 13 0 18.500 3.500" fill="none" stroke="#9a6a56" stroke-width="2.400"/>
<path d="M1037 311.500c2 1.800 6 1.800 8 0" fill="none" stroke="#c08672" stroke-width="1.600"/><path d="M1040 300c-1 4-2 7-2.500 9.500" fill="none" stroke="#eab8a6" stroke-width="1.200"/>
<path d="M1034 321.500c3-1.500 6-1 8.500 0 2.500-1 6-1.500 9 0-4 4.500-13 4.500-17.500 0z" fill="#da6e72"/>
<!-- hair cap + bangs -->
<path d="M990 300L981 290L980.500 270L986 258L1000 240C1008 236 1014 235.500 1020 235.500C1028 234.500 1036 235 1041 237.500C1046 235 1054 234.500 1060 235C1068 235.500 1074 237 1080 240L1093 258L1092.600 282.500L1088 293L1083 300L1080.300 296.800L1078.200 291.700L1075.200 282.500L1071 274.300C1066 271 1062 268 1057.700 266L1053.600 274.300L1048.500 270.200C1045 265 1043 260 1041 255C1038 259 1035 263 1031.800 266C1027 270 1023 274 1018.500 276.300L1015 275L1008.200 282.500L1003 290L1000 298L996 303Z" fill="url(#hair)"/>
<path d="M977.500 274l1.500 12 1.500-3-.5-10z" fill="#f01010"/>
<path d="M1012 258c4-6 12-9 20-9-2 8-8 16-16 21zM1060 252c6 0 12 4 14 12-6-2-12-6-14-12zM1044 252c3 0 6 2 8 5l-2 8c-3-4-5-8-6-13z" fill="#ff8276" opacity=".8"/>
<path d="M1000 250c6-6 14-9 22-10M1062 240c8 1 16 5 22 12" fill="none" stroke="#e00808" stroke-width="1.200" opacity=".7"/>
<!-- buns -->
<path d="M986 270.500c-6 1-12-1-15-4.500-5-1.500-7.500-6-7-11-1.500-6 1-12 5.500-16 4-7 12-12 21.500-12 8 0 14 4 16.500 9.500l-8 8c-6 6-11 14-13.500 26z" fill="url(#bun)"/>
<ellipse cx="990" cy="242.500" rx="11.500" ry="7.500" transform="rotate(28 990 242.500)" fill="#ff9a92" opacity=".85"/>
<path d="M966 255c6 4 12 4 18 2M969 262c5 4 10 4 15 2" fill="none" stroke="#dc0404" stroke-width="1.300" opacity=".7"/>
<path d="M1064 236.500c4-5 10-7.500 17.500-7.500 12 0 22 8 22.500 19.500.5 6-2 11-4 14l-3.500 6.500c-2 1.500-4 2.500-6 2.500-2-12-8-22-16-28z" fill="url(#bun)"/>
<ellipse cx="1088" cy="246.500" rx="8.500" ry="5" transform="rotate(30 1088 246.500)" fill="#ff9a92" opacity=".85"/>
<path d="M1079 250c6 4 10 10 12 18M1100 256c-2 6-6 10-10 12" fill="none" stroke="#dc0404" stroke-width="1.300" opacity=".6"/>
<!-- socks / ankles / shoes -->
<rect x="1012" y="756" width="14" height="14" fill="#f6ccb8"/><rect x="1060" y="756" width="14.500" height="14" fill="#f6ccb8"/>
<path d="M1006.500 770h29.300l-4 10 2 17h-24l2-17z" fill="url(#sock)"/><path d="M1051 770h30.200l-4 10 3 17h-25l1-17z" fill="url(#sock)"/>
<path d="M1006 797c8-5 22-5 30 0l4 16c0 6-4 10-10 10h-20c-5 0-7-4-6.700-8z" fill="#241a38"/><path d="M1052 797c8-5 24-5 32 0l6 18c0 6-4 9-10 9h-22c-5 0-7-4-7-8z" fill="#241a38"/>
<path d="M1008 800c8-4 20-4 27 0l1 5c-8-3-20-3-29 1zM1053 800c8-4 22-4 30 0l1.500 5c-9-3-22-3-32.500 1z" fill="#b982da"/>
<path d="M1006.500 816c0-6 8-10.500 16-10.500s15.500 4 15.500 10c0 4-3 6.500-7 6.500h-18c-4 0-6.500-2.500-6.500-6z" fill="url(#toe)"/><path d="M1054 817c0-6 8-10.500 17-10.500s17 4 17 10c0 4-3 6.500-7 6.500h-20c-4 0-7-2.500-7-6z" fill="url(#toe)"/>
<!-- ===== rig control curves ===== -->
<g fill="none" stroke-width="1">
<g stroke="#ecec6c" stroke-width="1.1">
<ellipse cx="1038" cy="217" rx="61" ry="15.300" transform="rotate(-2 1038 217)"/>
<path d="M1034.500 221.500l6-10.500 6 9zM1033 222.500l7.500-3 6 .500M1040.500 211v8.500"/>
<path d="M1009.500 243.500l90-4.500.500 25-90 2z"/><path d="M1055 254l-9 30"/>
<path d="M1125.500 290v40.500M1125.500 290l21 17-21 8.500"/>
<ellipse cx="1041.500" cy="306" rx="4" ry="3.200"/><ellipse cx="1042" cy="343" rx="6" ry="4"/>
<path d="M1038 364h8l-4 6z"/>
<path d="M1014 366c16-3 40-3 56-1M1014 368c16 4 40 4 56 0"/>
<path d="M1018 402l-21 20h84l-18-22M997 422l84 0"/>
<path d="M997 441c-4-6 10-12 40-16 24-3 46-5 50-1 2 4-2 8-10 11"/>
<path d="M1000 459l70-2 20-1-14 13-88 3 12-12M996 468l62-2"/>
<path d="M990 490h100l-14 10h-84zM998 488l90 0-24 14-74 0zM994 496l98 4M1000 492l20 22M1082 492l-22 22"/>
</g>
<g stroke="#1c1cf0">
<ellipse cx="1022" cy="258" rx="9.500" ry="9"/>
<path d="M1011 279h22v7h-22zM1014 280.500h4v4h-4zM1025 281h3v4h-3zM1019 283h4M1012 280l-5 4M1004 290l6-4"/>
<path d="M1015 300h10v2h-10z"/><ellipse cx="1016" cy="309.500" rx="3.200" ry="3.500"/><ellipse cx="1011" cy="323" rx="4.500" ry="6" transform="rotate(-15 1011 323)"/>
<path d="M1036 311l-3 2 3 2M1030 322c4-2 8-2 10 0-2 3-7 3-10 0z"/>
<path d="M987 297c-4 8-2 18 4 24l8 2"/>
<path d="M921.500 380v31M921.500 380l-15 21 15 4"/>
<path d="M951 583v37M951 583l-19 22 19 5"/>
<ellipse cx="942" cy="466" rx="20" ry="2.500" transform="rotate(38 942 466)"/>
<path d="M992 370l3 40M1009 365l2 14M1005 362l4-6 3 22"/>
<ellipse cx="898" cy="512" rx="11" ry="4" transform="rotate(35 898 512)"/><ellipse cx="896" cy="519" rx="10" ry="3.500" transform="rotate(40 896 519)"/><path d="M884 533l-5 8 5 4 4-8zM893 528l6 6-2 6"/>
<circle cx="1032" cy="706" r="12.300"/><ellipse cx="1032" cy="706" rx="5" ry="12.300"/><path d="M1020 706h24M1032 694v26M1020 703h24M1029 694v24"/>
<circle cx="1018.500" cy="781.800" r="19.500"/><path d="M999 805a22 22 0 0 1 40-12l4 12"/><ellipse cx="1019" cy="781" rx="19" ry="4"/><path d="M1021 770v18M1000 781h38"/>
<path d="M995.700 803l8 15.600 39.700 0-8-16.300z"/>
</g>
<g stroke="#f01414">
<path d="M1053 279h22v7h-22zM1056 280.500h4v4h-4zM1066 281h3v4h-3z"/><path d="M1058 300h10v2h-10z"/><ellipse cx="1067" cy="309.500" rx="3" ry="3.500"/>
<path d="M1047 312h4v4h-4zM1044 318c4 4 8 4 10 0M1046 320h6M1046 323h7"/>
<path d="M1076 322c-4 6-4 12-1 16M1082 324l6-2"/><path d="M1070 243c8-2 16 2 20 10"/>
<path d="M1152.500 380v32M1152.500 380l19 17.500-19 4"/>
<path d="M1131.500 583v37M1131.500 583l21 18-21 5"/>
<ellipse cx="1126.500" cy="470" rx="23" ry="2.200" transform="rotate(-33 1126.500 470)"/>
<path d="M1075 372l-3-12-4 0 2 16M1089 372l4-12M1088 400l6-30"/>
<path d="M1049 526h34c8 1 13 4 13 8s-4 6-9 7"/>
<ellipse cx="1168" cy="515" rx="13" ry="3.500" transform="rotate(-28 1168 515)"/><path d="M1166 520l10 6 4 8-6-2M1170 528l6 10"/>
<path d="M1101 664a36 13.200 0 0 1-64 5M1094 653c5 3 8 7 7 11"/>
<ellipse cx="1068.200" cy="783.500" rx="29.200" ry="4.500"/><circle cx="1067.600" cy="802.300" r="23.800"/><path d="M1067 826h5" stroke-width="1.500"/>
</g>
<g stroke="#62cdea">
<ellipse cx="948.700" cy="449.300" rx="38.600" ry="3.600" transform="rotate(37.100 948.700 449.300)"/>
<ellipse cx="1126.400" cy="452.600" rx="41.200" ry="3.400" transform="rotate(-33.400 1126.400 452.600)"/>
<path d="M979.300 651.800a62.700 15.400 0 0 0 125.400 0"/>
</g>
<path d="M1024 697l8 20" stroke="#9a7a6a"/>
</g>
</svg>
<!-- ===== Picker window ===== -->
<div id="win" style="z-index:5;height:577px;border-radius:8px 8px 5px 5px;box-shadow:0 0 0 1px #505050,0 3px 10px rgba(0,0,0,.16),0 14px 40px 4px rgba(0,0,0,.26)">
<div style="position:absolute;left:0;top:0;width:816px;height:30px;background:#f3f3f3"></div>
<div style="position:absolute;left:0;top:30px;width:816px;height:19px;background:#444"></div>
<div style="position:absolute;left:0;top:49px;width:816px;height:19px;background:#373737"></div>
<div style="position:absolute;left:2px;top:51px;width:145px;height:16.500px;background:#404040;border-radius:3px 3px 0 0"></div>
<div class="t" style="left:29.3px;top:7.5px;font-size:12.6px;transform:scaleX(.945);color:#7e7e7e">Wizart Character Picker</div>
<div class="t" style="left:9.3px;top:33.2px;font-size:12px;transform:scaleX(.97);color:#dcdcdc">Options</div>
<div class="t" style="left:66px;top:33px;font-size:12px;color:#dcdcdc">Dev</div>
<div class="t" style="left:12.3px;top:53px;font-size:12px;transform:scaleX(.93);color:#dcdcdc">elena_rig_anim:elena</div>
<svg width="816" height="578" viewBox="19 162 816 578">
<!-- app icon -->
<path d="M28.500 170.500l2-2h10l2 2v12l-1 1h-12l-1-1z" fill="#2fa4c2"/><path d="M28.500 170.500l2-2v14l-2 1z" fill="#7fdcec"/><rect x="29" y="179" width="13.500" height="4.500" fill="#1d5d94"/><text x="31" y="178" font-family="Liberation Sans,sans-serif" font-weight="bold" font-size="9" fill="#fff">M</text><text x="31.500" y="183" font-family="Liberation Sans,sans-serif" font-weight="bold" font-size="3.600" fill="#cfe8f4">MAYA</text>
<!-- window buttons -->
<path d="M716 176.500h10" stroke="#777" stroke-width="1"/><rect x="761.500" y="171.500" width="9" height="9" rx="1" fill="none" stroke="#777" stroke-width="1"/><path d="M807.500 171.500l9.500 9.500M817 171.500l-9.500 9.500" stroke="#666" stroke-width="1.100"/>
<!-- tab close / plus / arrow -->
<path d="M146.500 218l7 7M153.500 218l-7 7" stroke="#b0b4b4" stroke-width="1.800"/>
<path d="M811 222.500h6M814 219.500v6" stroke="#e8e8e8" stroke-width="1"/><path d="M823 219h7l-3.500 4z" fill="#f0f0f0"/>
</svg>
<!-- picker canvas graphics -->
<svg width="816" height="578" viewBox="19 162 816 578">
<defs><clipPath id="thclip"><rect x="26" y="235" width="70" height="75"/></clipPath><clipPath id="faceclip"><rect x="640" y="270" width="185" height="389"/></clipPath></defs>
<g stroke="#262626" stroke-width="1" stroke-linejoin="round">
<!-- ===== body silhouette (dark gray) ===== -->
<g fill="#4f4f4f">
<!-- hair -->
<path d="M416.200 336.400L407.400 329.300L400.300 333.700L401.200 327.500L395 322.200L393.200 316.900C391 312 390 308 389.600 304.500L387 288.500L386.400 276.400C382 275 379 272.500 378.100 269.900C375 264 375.500 257 376.300 252C378 243 385 238 393 238C401 238 407 243 410 249.500L412.700 252.200L417.100 249.500L419.800 252.200C422 253.500 424.500 253.900 426.900 253.900C431 254 435 253.500 438.400 252.200L441.900 249.500L444.600 251.300C447 243 453 238 461 238C469 238 476 243 477.400 252C478.200 257 478.500 264 474.700 270.800C473.500 273 471 275.500 466.800 276.400L465.900 288.500L464.100 304.500C463.500 308 462.500 312 460.500 316.900L458.500 322.200L452.500 327.500L453.500 333.700L446.500 329.300L437.500 336.400Z" stroke-width="1.200"/>
<!-- torso + arms + legs silhouette -->
<g id="silh"><path d="M416.4 336.0L438.6 336.0L438.6 350.0L459.5 360.0L462.0 366.0L456.0 396.0L451.5 414.5L448.0 430.3L451.5 446.0L453.0 453.0L459.0 480.0L426.5 487.0L394.0 480.0L400.0 453.0L401.5 446.0L405.0 430.3L401.5 414.5L397.0 396.0L391.0 366.0L393.5 360.0L414.4 350.0z M414.0 349.5L392.8 362.0L379.0 383.5L359.8 404.0L355.5 408.0L356.5 413.0L353.5 419.0L348.5 427.5L346.0 432.3L321.6 459.6L317.8 460.8L318.0 464.0L306.0 474.0L298.7 485.4L300.5 487.5L306.0 482.5L302.0 494.2L304.5 496.0L309.5 488.0L308.4 500.5L311.0 501.5L314.5 491.0L315.2 497.0L317.5 497.0L320.0 489.5L323.5 495.0L325.9 494.2L327.5 484.0L328.2 473.8L330.4 471.5L357.0 441.6L361.5 440.6L365.5 436.0L370.5 430.5L385.0 417.0L386.5 412.0L398.6 397.0z M439.0 349.5L460.2 362.0L474.0 383.5L493.2 404.0L497.5 408.0L496.5 413.0L499.5 419.0L504.5 427.5L507.0 432.3L531.4 459.6L535.2 460.8L535.0 464.0L547.0 474.0L554.3 485.4L552.5 487.5L547.0 482.5L551.0 494.2L548.5 496.0L543.5 488.0L544.6 500.5L542.0 501.5L538.5 491.0L537.8 497.0L535.5 497.0L533.0 489.5L529.5 495.0L527.1 494.2L525.5 484.0L524.8 473.8L522.6 471.5L496.0 441.6L491.5 440.6L487.5 436.0L482.5 430.5L468.0 417.0L466.5 412.0L454.4 397.0z M400.0 453.0L394.0 480.0L384.0 497.0L379.2 513.6L385.5 510.0L382.7 527.0L387.8 531.3L387.0 557.0L385.0 580.0L382.0 611.0L389.0 634.0L388.4 652.5L401.2 652.5L404.0 634.0L412.6 611.0L413.5 580.0L414.0 559.8L419.7 522.8L426.5 486.0L426.5 453.0z M453.0 453.0L459.0 480.0L469.0 497.0L473.8 513.6L467.5 510.0L470.3 527.0L465.2 531.3L466.0 557.0L468.0 580.0L471.0 611.0L464.0 634.0L464.6 652.5L451.8 652.5L449.0 634.0L440.4 611.0L439.5 580.0L439.0 559.8L433.3 522.8L426.5 486.0L426.5 453.0z M388.4 651.0L377.0 641.5L373.2 645.0L382.0 658.0L357.0 665.3L351.3 673.8L355.6 682.8L380.0 685.5L406.9 685.5L408.3 676.7L403.4 655.0L401.2 651.0z M464.6 651.0L476.0 641.5L479.8 645.0L471.0 658.0L496.0 665.3L501.7 673.8L497.4 682.8L473.0 685.5L446.1 685.5L444.7 676.7L449.6 655.0L451.8 651.0z" fill="#262626" stroke="#262626" stroke-width="2.2" stroke-linejoin="round"/><path d="M416.4 336.0L438.6 336.0L438.6 350.0L459.5 360.0L462.0 366.0L456.0 396.0L451.5 414.5L448.0 430.3L451.5 446.0L453.0 453.0L459.0 480.0L426.5 487.0L394.0 480.0L400.0 453.0L401.5 446.0L405.0 430.3L401.5 414.5L397.0 396.0L391.0 366.0L393.5 360.0L414.4 350.0z M414.0 349.5L392.8 362.0L379.0 383.5L359.8 404.0L355.5 408.0L356.5 413.0L353.5 419.0L348.5 427.5L346.0 432.3L321.6 459.6L317.8 460.8L318.0 464.0L306.0 474.0L298.7 485.4L300.5 487.5L306.0 482.5L302.0 494.2L304.5 496.0L309.5 488.0L308.4 500.5L311.0 501.5L314.5 491.0L315.2 497.0L317.5 497.0L320.0 489.5L323.5 495.0L325.9 494.2L327.5 484.0L328.2 473.8L330.4 471.5L357.0 441.6L361.5 440.6L365.5 436.0L370.5 430.5L385.0 417.0L386.5 412.0L398.6 397.0z M439.0 349.5L460.2 362.0L474.0 383.5L493.2 404.0L497.5 408.0L496.5 413.0L499.5 419.0L504.5 427.5L507.0 432.3L531.4 459.6L535.2 460.8L535.0 464.0L547.0 474.0L554.3 485.4L552.5 487.5L547.0 482.5L551.0 494.2L548.5 496.0L543.5 488.0L544.6 500.5L542.0 501.5L538.5 491.0L537.8 497.0L535.5 497.0L533.0 489.5L529.5 495.0L527.1 494.2L525.5 484.0L524.8 473.8L522.6 471.5L496.0 441.6L491.5 440.6L487.5 436.0L482.5 430.5L468.0 417.0L466.5 412.0L454.4 397.0z M400.0 453.0L394.0 480.0L384.0 497.0L379.2 513.6L385.5 510.0L382.7 527.0L387.8 531.3L387.0 557.0L385.0 580.0L382.0 611.0L389.0 634.0L388.4 652.5L401.2 652.5L404.0 634.0L412.6 611.0L413.5 580.0L414.0 559.8L419.7 522.8L426.5 486.0L426.5 453.0z M453.0 453.0L459.0 480.0L469.0 497.0L473.8 513.6L467.5 510.0L470.3 527.0L465.2 531.3L466.0 557.0L468.0 580.0L471.0 611.0L464.0 634.0L464.6 652.5L451.8 652.5L449.0 634.0L440.4 611.0L439.5 580.0L439.0 559.8L433.3 522.8L426.5 486.0L426.5 453.0z M388.4 651.0L377.0 641.5L373.2 645.0L382.0 658.0L357.0 665.3L351.3 673.8L355.6 682.8L380.0 685.5L406.9 685.5L408.3 676.7L403.4 655.0L401.2 651.0z M464.6 651.0L476.0 641.5L479.8 645.0L471.0 658.0L496.0 665.3L501.7 673.8L497.4 682.8L473.0 685.5L446.1 685.5L444.7 676.7L449.6 655.0L451.8 651.0z" fill="#4f4f4f" stroke="#4f4f4f" stroke-width=".4" stroke-linejoin="round"/></g>
</g>
<!-- ===== coloured picker zones ===== -->
<ellipse cx="426.300" cy="302.300" rx="25.300" ry="30.800" fill="#dc8a25"/>
<rect x="418" y="338.700" width="18.300" height="10.300" fill="#dc8a25"/>
<path d="M413 355.300h27l17.400 7.300-4.900 29.700c-17 3-35 3-51.900 0l-5-29.700z" fill="#f0c814"/>
<path d="M401 395.300c17 3 34 3 51 0l-3.400 16.400c-14.600 2-29.600 2-44.600 0z" fill="#dc8a25"/>
<path d="M404.600 414.500c14.400 2 29 2 43.400 0l-2.300 10.100c-12.700 1-25.400 1-38.400 0z" fill="#f0c814"/>
<path d="M407.800 427.500c12.400 1 25 1 37.400 0l.5 7.300h-38.400z" fill="#dc8a25"/>
<path d="M406.900 437.500h39.200l1.200 11.900h-41.800z" fill="#dc8a25"/>
<path d="M405 452.100h43l-21.500 32.300z" fill="#f0c814"/>
<!-- left (blue) arm -->
<path d="M394.7 364.5L399.0 393.5L380.7 384.2z" fill="#4468b0"/>
<path d="M380.2 385.3L398.0 395.0L369.0 428.2L356.3 419.5z" fill="#4468b0"/>
<path d="M347.2 433.1L356.0 441.0L328.8 470.3L321.4 463.1z" fill="#4468b0"/>
<path d="M319.1 466.4L326.8 473.8L325.9 482.5L322.6 485.4L314.8 489.3L307.0 478.6z" fill="#4468b0"/>
<circle cx="356.5" cy="431" r="6.2" fill="#6e6e6e"/>
<!-- right (red) arm -->
<path d="M458.3 364.5L454.0 393.5L472.3 384.2z" fill="#dc3023"/>
<path d="M472.8 385.3L455.0 395.0L484.0 428.2L496.7 419.5z" fill="#dc3023"/>
<path d="M505.8 433.1L497.0 441.0L524.2 470.3L531.6 463.1z" fill="#dc3023"/>
<path d="M533.9 466.4L526.2 473.8L527.1 482.5L530.4 485.4L538.2 489.3L546.0 478.6z" fill="#dc3023"/>
<circle cx="496.5" cy="431" r="6.2" fill="#6e6e6e"/>
<!-- legs -->
<path d="M402 454l22.500 33c-5 22-10 46-13.900 70.500h-20c1-34 4-70 11.400-103.500z" fill="#6e6e6e"/>
<path d="M450.500 454c6 8 9 18 9.500 28l3 75.500h-21.300c-3-26-7-50-14.200-72z" fill="#dc3023"/>
<circle cx="400.300" cy="569.200" r="7.500" fill="#4468b0"/>
<circle cx="452.500" cy="569.200" r="7.500" fill="#6e6e6e"/>
<path d="M389 579.800h21.600l-.9 31c-4 14-8 28-9.900 41.700h-9.200c1-14-2-28-5.600-41.500z" fill="#6e6e6e"/>
<path d="M442.500 579.800h21.400l3.700 25.600c-2 16-3 32-3.700 47.100h-7.700c-3-13-8-26-13.700-38.500z" fill="#dc3023"/>
<path d="M402.600 658.500l-18 1c-10 3-24 8-28.500 14-1.500 4 1 7 5 8.500h40c2-8 2-16 1.500-23.500z" fill="#4468b0"/>
<circle cx="396" cy="673.800" r="7" fill="#4468b0"/>
<path d="M454 657.500l18 1.500c10 3 24 8 27 14.500 1.500 4-1 7-5 8.500h-38.500c-2.500-8-2.500-16-1.500-24.500z" fill="#dc3023"/>
<circle cx="457.600" cy="673.800" r="7" fill="#6e6e6e"/>
<!-- platforms -->
<rect x="337" y="688.700" width="70.200" height="11.300" fill="#4468b0"/>
<rect x="448.800" y="688.700" width="70.200" height="11.300" fill="#dc3023"/>
<rect x="337" y="704.600" width="182" height="15.400" fill="#dc8a25"/>
<!-- ===== backpack ===== -->
<path d="M177 352L189 349L197 382H225L233 349L245 352C248 366 250 378 251 396L252.500 424h2.500v10h-2.500L254 468C226 474 196 474 167.500 468L169 434h-2.500v-10h2.500L171 396C172 378 174 366 177 352Z" fill="#4f4f4f"/>
<path d="M186 363l5 20h-8zM238 363l-5 20h8z" fill="#323232"/>
<path d="M180 391c20-5 42-5 62 0 5 24 7 48 7 72-24 5-52 5-76 0 0-24 2-48 7-72z" fill="#f0c814"/>
<!-- ===== hand pickers ===== -->
<path d="M224 567v-22c0-18 14-30 36-30h20c16 0 26 8 26 22 0 10-6 18-14 18h-8v12z" fill="#4f4f4f"/>
<g fill="#4468b0"><rect x="226.700" y="541" width="8" height="25.400"/><rect x="240.500" y="541" width="8.500" height="25.400"/><rect x="258" y="541" width="8" height="25.400"/><rect x="273" y="541" width="8" height="25.400"/><rect x="289.600" y="529.700" width="9" height="23.300"/>
<circle cx="230.500" cy="574.700" r="3.200"/><circle cx="244.600" cy="574.700" r="3.200"/><circle cx="261.800" cy="574.700" r="3.200"/><circle cx="277.200" cy="574.700" r="3.200"/><circle cx="294.400" cy="562.300" r="3.500"/></g>
<path d="M633 568v-22c0-18-14-31.500-36-31.500h-20c-16 0-25.500 8-25.500 22 0 10 5 18 13 19h8v12.500z" fill="#4f4f4f"/>
<g fill="#dc3023"><rect x="619.900" y="540.500" width="7.500" height="25.300"/><rect x="604.600" y="540.500" width="7.500" height="25.300"/><rect x="589.800" y="540.500" width="7.500" height="25.300"/><rect x="575.200" y="540.500" width="7.300" height="25.300"/><rect x="559.700" y="529.700" width="9.300" height="23.300"/>
<circle cx="623.600" cy="574.500" r="3.200"/><circle cx="608.300" cy="574.500" r="3.200"/><circle cx="593.300" cy="574.500" r="3.200"/><circle cx="577.800" cy="574.500" r="3.200"/><circle cx="563.200" cy="560.500" r="3.500"/></g>
</g>
<!-- ===== dots ===== -->
<g stroke="#262626" stroke-width=".8">
<g fill="#373463"><circle cx="347.500" cy="394.200" r="5.600"/><circle cx="334.400" cy="411" r="5.600"/><circle cx="322" cy="430.300" r="5.600"/><circle cx="364.700" cy="530.500" r="6"/><circle cx="366.100" cy="569.200" r="6"/><circle cx="365" cy="610.300" r="6"/></g>
<g fill="#5a1c1c"><circle cx="503.400" cy="394.200" r="5.600"/><circle cx="516" cy="411" r="5.600"/><circle cx="529.600" cy="429.600" r="5.600"/><circle cx="488.700" cy="530.500" r="6"/><circle cx="489" cy="569.200" r="6"/><circle cx="488.100" cy="612.500" r="6"/></g>
<g fill="#22dd33" stroke="none"><circle cx="320.500" cy="400.500" r="5.500"/><circle cx="532.500" cy="400.500" r="5.500"/><circle cx="341.300" cy="567.800" r="5.700"/><circle cx="513.800" cy="567.800" r="5.700"/></g>
<circle cx="506" cy="310" r="6" fill="#4468b0"/><circle cx="528.300" cy="310" r="6" fill="#dc3023"/>
</g>
<!-- flags -->
<path d="M361 299l10 12h-8v7.600h-2z" fill="#f0c814"/>
<path d="M304.500 387.400v19.600h-1.500v-8h-8.500z" fill="#4468b0" stroke="#262626" stroke-width=".5"/>
<path d="M548.500 387.400v19.600h1.500v-8l8.500-1.500z" fill="#dc3023" stroke="#262626" stroke-width=".5"/>
<path d="M341.500 588.300v20h-1.500v-8.500h-8.600z" fill="#4468b0" stroke="#262626" stroke-width=".5"/>
<path d="M513 588.300v20h1.500v-8.500l8.500-.2z" fill="#dc3023" stroke="#262626" stroke-width=".5"/>
<!-- eye icon -->
<path d="M509 292c4-7 12-7 16 0-4 7-12 7-16 0z" fill="#f4f4f4"/><circle cx="517" cy="292" r="4.300" fill="#d8801f"/><circle cx="517" cy="292" r="2" fill="#6a3a10"/>
<!-- ===== face picker (clipped) ===== -->
<g clip-path="url(#faceclip)" stroke="#1c1c1c" stroke-width="1.200" stroke-linejoin="round">
<path d="M724.600 301l37-16c22 0 44 1 66 3v51.500h-100c-2 0-3-1-3-3z" fill="#4f4f4f"/>
<rect x="728.500" y="303.400" width="16" height="15" rx="3" fill="#4468b0"/>
<rect x="765.400" y="289.600" width="22" height="29" rx="2" fill="#4468b0"/>
<path d="M810.200 290.600l6.800 8h-4v11h4l-6.800 8-6.800-8h4v-11h-4z" fill="#373463"/>
<rect x="819.800" y="292.700" width="14" height="23" rx="2" fill="#4468b0"/>
<rect x="731.300" y="320.600" width="100" height="15" rx="2" fill="#4468b0"/>
<!-- ear -->
<path d="M662 427c0-16 10-27.600 24-27.600 16 0 28 12 31 27.600l5.800 45c.8 12-2 19-8 18-22-8-52.800-38-52.800-63z" fill="#4468b0" stroke="#000" stroke-width="1.500"/>
<!-- eye -->
<circle cx="785.400" cy="425.200" r="61" fill="#4f4f4f"/>
<path d="M784.900 354.200l7.300 10-7.300 10-7.300-10z" fill="#373463"/><path d="M784.900 475l7.300 10-7.300 10-7.300-10z" fill="#373463"/>
<path d="M749 394.500c22-21 52-21 73.500-2l-1 9c-22-18-50-18-72.500 1z" fill="#4468b0"/>
<path d="M749 402.500c7-6 14-9.500 21-12v12c-7 3-14 7-20 13zM770 390.500c10-3 20-3 31 0v11c-10-3-20-3-31 0zM801 390.500c7 2.500 14 6 21 11l-1 13c-6-6-13-10-20-13z" fill="#373463"/>
<path d="M770 390.500c10-3 20-3 31 0v11c-10-3-20-3-31 0z" fill="#5a5a5a"/>
<path d="M749 457.500c22 21 52 21 73.500 2l-1-9c-22 18-50 18-72.500-1z" fill="#4468b0"/>
<path d="M749 449.500c7 6 14 9.500 21 12v-12c-7-3-14-7-20-13zM801 461.500c7-2.500 14-6 21-11l-1-13c-6 6-13 10-20 13z" fill="#373463"/>
<path d="M770 461.500c10 3 20 3 31 0v-11c-10 3-20 3-31 0z" fill="#5a5a5a"/>
<ellipse cx="785.400" cy="426.200" rx="39.800" ry="28" fill="#dff1fb"/>
<circle cx="788" cy="427" r="19" fill="#4f4f4f"/>
<path d="M769 427.500h9.500c1 6 5 9.500 10 9.500 5.500 0 9-4 9-9 0-3-1-5-3-6-2 1-5 0-6-3-1-4 2-8 6-8 7 0 12.500 8 12.500 16 0 11-8 19-19 19-10 0-19-8-19-18.500z" fill="#4468b0"/>
<!-- lower face -->
<path d="M758.500 510.300c22-2 44-5 68-10.500v160c-12-4-24-13-33.300-24-10-12-18-22-23.800-30-6-10-10-22-12-32.600-3-8-9-16-11.900-28-1-8 0-16 3.300-26z" fill="#4f4f4f"/>
<ellipse cx="746" cy="507.700" rx="13.600" ry="10.300" transform="rotate(28 746 507.700)" fill="#4468b0"/>
<ellipse cx="754.800" cy="548.300" rx="10" ry="22.800" transform="rotate(-9 754.800 548.300)" fill="#4468b0"/>
<path d="M734.700 579.700v17.800l35.100-9.800z" fill="#373463"/>
<path d="M795.400 574.300l21.600-5.400 2.200 13-5.400 4.300h-16.300zM797.500 588.700h16.300l5.400 7.500-3.200 12.800-20.600-10z" fill="#373463"/>
<path d="M818 568.500l10-2v13l-8 2zM820 595l8 3v14l-11-4z" fill="#4468b0"/>
<ellipse cx="826" cy="587.500" rx="12" ry="5.500" fill="#5a5a5a"/>
<circle cx="784.500" cy="585.100" r="13" fill="#4468b0"/>
<ellipse cx="826" cy="554.200" rx="21.500" ry="7" transform="rotate(-6 826 554.200)" fill="#4468b0"/>
<ellipse cx="828" cy="620" rx="24.500" ry="8" transform="rotate(14 828 620)" fill="#4468b0"/>
</g>
<!-- thumbnail card -->
<rect x="21" y="230.200" width="80" height="99.400" rx="4.500" fill="#fff"/>
<rect x="26" y="235" width="70" height="75" fill="#c2c2c2"/>
<g clip-path="url(#thclip)">
<path d="M56 296l14-4 10 18h-34z" fill="#e9b08a"/>
<path d="M40 310c8-8 16-10 22-9l6 9zM70 298c8 2 16 6 22 12h-20z" fill="#cf3d22"/>
<path d="M30 253c-1-8 4-15 11-15 5 0 9 3 10 8 6-4 14-6 20-5 2-4 6-7 11-7 8 0 13 7 12 15 0 6-3 10-8 12 2 8 1 18-2 26l4 6-5-1 2 7-6-5c-2 4-6 8-10 10l-8-30-28-4-2 12-4 4 0-8-5 6c0-10 2-18 6-24-1-2 1-5 2-7z" fill="#cc421d"/>
<path d="M41 266c6-10 18-12 28-6l3 14c1 10-2 20-9 26-6 4-12 4-16 2-6-4-9-12-9-20z" fill="#eeb48c"/>
<path d="M38 264c8-12 22-14 34-4-10-2-18 0-24 6l-2 12c-2-4-6-8-8-14z" fill="#d24a20"/>
<path d="M71.500 271c3-2 6 0 6 4s-2 8-5 8z" fill="#e8a47c"/><circle cx="74" cy="282.500" r="1.400" fill="#f050a0"/>
<path d="M40.500 279c2-2 5-2 7 0-2 2-5 2-7 0zM53 276c2-3 6-3 8 0-2 2-6 2-8 0z" fill="#f8f8f8"/><circle cx="45" cy="279" r="1.500" fill="#283c6c"/><circle cx="58" cy="275.500" r="1.700" fill="#283c6c"/>
<path d="M39 277c3-3 6-3 9-1M52 273c3-3 7-3 10 0" fill="none" stroke="#3a2018" stroke-width="1"/>
<path d="M52 292c3 1 6 0 8-2" fill="none" stroke="#b85848" stroke-width="1"/><path d="M49 284l-2 4 3 0" fill="none" stroke="#c88060" stroke-width=".8"/>
<path d="M33 246c3-4 8-5 12-3M74 240c4-3 10-2 14 2M44 258c6-5 14-6 22-4" fill="none" stroke="#ec7a48" stroke-width="1.400"/>
<path d="M62 304c4 3 10 3 14 0" fill="none" stroke="#f08ab0" stroke-width="1" stroke-dasharray="1.500 1"/>
</g>
</svg>
<!-- picker labels / buttons (coords relative to window: x-19, y-162) -->
<div class="hd" style="left:21px;top:172.500px">PICK</div>
<div class="btn" style="left:4px;top:187px;width:18px">B</div><div class="btn" style="left:26px;top:187px;width:18px">F</div><div class="btn" style="left:48px;top:187px;width:27px">ALL</div>
<div class="hd" style="left:618px;top:72.500px">FOCUS</div>
<div class="btn g" style="left:609px;top:87px;width:18px">B</div><div class="btn" style="left:631px;top:87px;width:18px">F</div><div class="btn" style="left:653px;top:87px;width:27px">ALL</div>
<div class="hd" style="left:714px;top:72.500px">VISIBILITY</div>
<div class="btn" style="left:701px;top:87px;width:18px">V</div>
<div class="btn g s" style="left:721px;top:87px;width:27px;line-height:19px">CTRL</div>
<div class="btn g s" style="left:751px;top:87px;width:27px;padding-top:1px">FACE<br>CTRL</div>
<div class="btn s" style="left:781px;top:87px;width:27px;padding-top:1px">FACE<br><span style="font-size:5.800px;font-weight:bold;position:relative;top:-1.500px">MINORS</span></div>
<div class="lbl" style="left:460px;top:121px;width:18px;height:16px;font-size:12.500px;line-height:16px">FK</div>
<div class="lbl" style="left:263px;top:250.500px;width:21px;height:20.500px;font-size:14.500px;line-height:21px">FK</div>
<div class="lbl" style="left:530.500px;top:250px;width:22px;height:20.500px;font-size:14.500px;line-height:21px">FK</div>
<div class="lbl" style="left:298.500px;top:450px;width:24.500px;height:21px;font-size:14.500px;line-height:21px;font-family:'DejaVu Serif','Liberation Serif',serif">IK</div>
<div class="lbl" style="left:494px;top:451px;width:24px;height:21px;font-size:14.500px;line-height:21px;font-family:'DejaVu Serif','Liberation Serif',serif">FK</div>
<div style="position:absolute;left:2px;top:148.500px;width:80px;height:14px;text-align:center;font-family:'Liberation Serif',serif;font-weight:bold;font-size:11.800px;line-height:14px;color:#000;letter-spacing:.2px">ELENA</div>
<svg width="816" height="578" viewBox="19 162 816 578">
<!-- mouse cursor -->
<path d="M542 427v16.500l3.800-3.600 2.900 6.600 2.600-1.200-2.900-6.400h5.300z" fill="#fff" stroke="#000" stroke-width="1" stroke-linejoin="round"/>
</svg>
</div>
</div></body></html>
